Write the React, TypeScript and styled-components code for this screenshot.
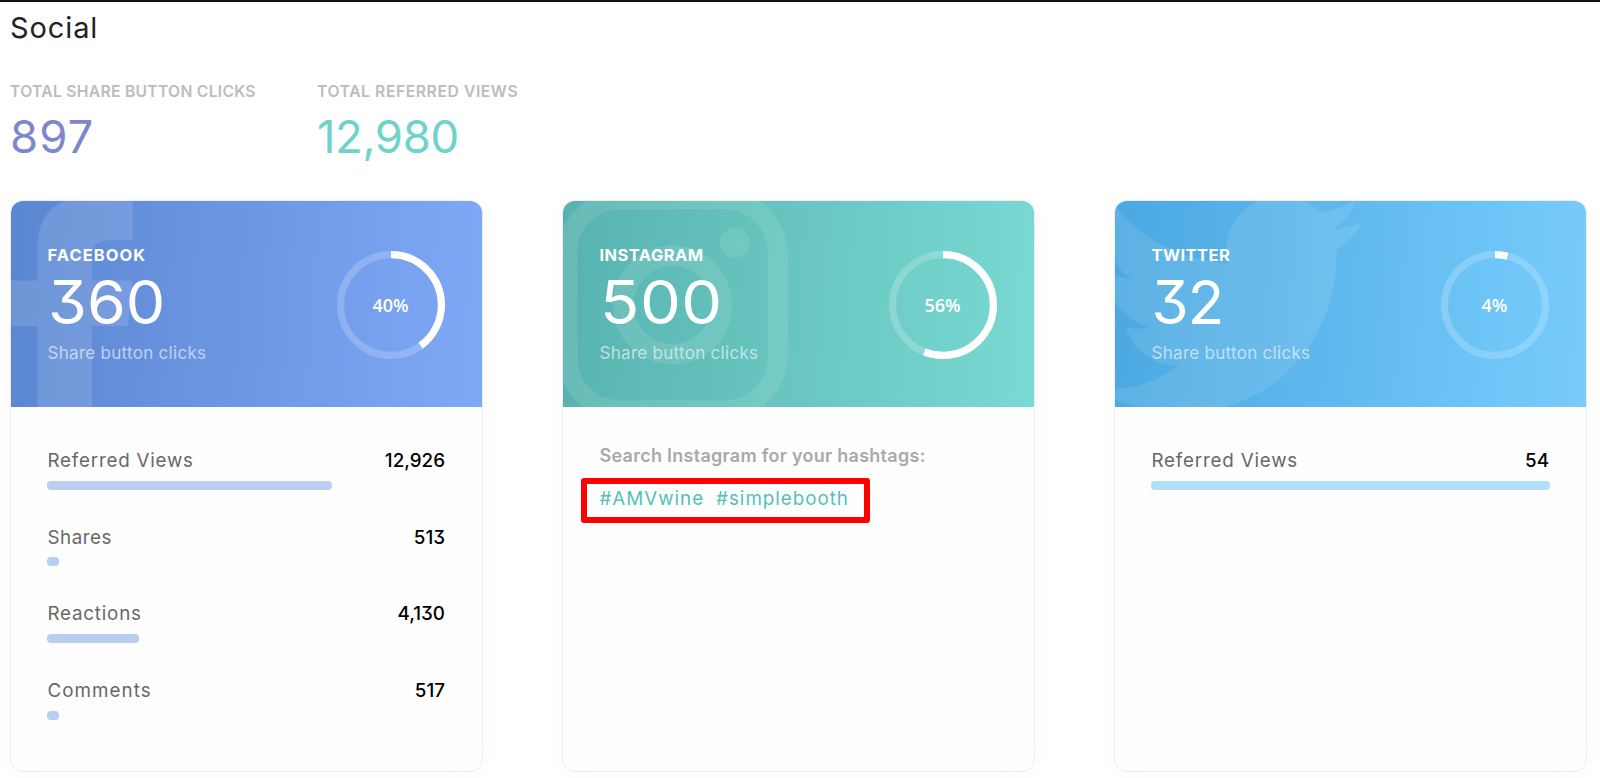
import React from "react";
import styled, { createGlobalStyle } from "styled-components";

const GlobalStyle = createGlobalStyle`
  * { box-sizing: border-box; }
  body {
    margin: 0;
    background: #fff;
    font-family: Inter, "Liberation Sans", sans-serif;
    font-feature-settings: "cv09" 1;
    overflow: hidden;
  }
`;

const Page = styled.main`
  height: 778px;
  padding: 8px 13px 0 10px;
  border-top: 2px solid #111;
`;

const Title = styled.h1`
  margin: 0;
  color: #222;
  font-size: 29px;
  font-weight: 400;
  line-height: 35px;
  letter-spacing: 0.9px;
`;

const Totals = styled.section`
  display: flex;
  margin-top: 37px;
`;

const Total = styled.div`
  width: 307px;
`;

const TotalLabel = styled.div<{ $tracking: number }>`
  color: #bcbcbc;
  font-size: 15.7px;
  font-weight: 600;
  line-height: 20px;
  letter-spacing: ${(p) => p.$tracking}px;
  white-space: nowrap;
`;

const TotalValue = styled.div<{ $color: string; $tracking: number }>`
  margin-top: 8px;
  color: ${(p) => p.$color};
  font-size: 45.5px;
  font-weight: 400;
  line-height: 54px;
  letter-spacing: ${(p) => p.$tracking}px;
`;

const Cards = styled.section`
  display: grid;
  grid-template-columns: repeat(3, 473px);
  column-gap: 79px;
  margin-top: 36px;
`;

const Card = styled.article`
  height: 572px;
  border: 1px solid #eeeeee;
  border-radius: 13px;
  background: #fefefe;
  background-clip: padding-box;
  box-shadow: 0 0 30px rgba(0, 0, 0, 0.02);
  overflow: hidden;
`;

const CardHeader = styled.header<{ $gradient: string }>`
  position: relative;
  display: flex;
  justify-content: space-between;
  height: 206px;
  padding: 44px 37.5px 0 36.5px;
  background: ${(p) => p.$gradient};
  color: #fff;
  overflow: hidden;
`;

const Watermark = styled.svg`
  position: absolute;
  top: 0;
  left: 0;
  width: 300px;
  height: 206px;
  fill: #fff;
`;

const Headline = styled.div`
  position: relative;
`;

const Network = styled.div<{ $tracking: number }>`
  font-size: 16.5px;
  font-weight: 650;
  line-height: 20px;
  letter-spacing: ${(p) => p.$tracking}px;
`;

const Clicks = styled.div<{ $stretch: number; $tracking: number }>`
  margin-top: 3.5px;
  font-size: 60px;
  font-weight: 400;
  line-height: 66px;
  letter-spacing: ${(p) => p.$tracking}px;
  transform: scaleX(${(p) => p.$stretch});
  transform-origin: left;
`;

const Caption = styled.div`
  margin-top: 7.5px;
  font-size: 17px;
  line-height: 22px;
  letter-spacing: 0.29px;
  opacity: 0.58;
`;

const Donut = styled.div`
  position: relative;
  display: grid;
  place-items: center;
  width: 108px;
  height: 108px;
  margin-top: 6px;
`;

const Ring = styled.svg`
  grid-area: 1 / 1;
  width: 108px;
  height: 108px;
  fill: none;
  stroke: #fff;
  stroke-width: 7.2;
`;

const Percent = styled.span`
  grid-area: 1 / 1;
  font: 600 18px/24px "Open Sans", sans-serif;
`;

const CardBody = styled.div`
  padding: 42px 36.5px 0 36px;
`;

const Metric = styled.div`
  height: 76.7px;
`;

const MetricText = styled.div`
  display: flex;
  justify-content: space-between;
  padding: 0 0.5px;
  font-size: 18.8px;
  line-height: 24px;
`;

const MetricName = styled.span<{ $tracking: number }>`
  color: #686868;
  letter-spacing: ${(p) => p.$tracking}px;
`;

const MetricValue = styled.span`
  color: #000;
  font-weight: 520;
`;

const Bar = styled.div<{ $color: string }>`
  height: 9px;
  margin-top: 7.7px;
  border-radius: 4px;
  background: ${(p) => p.$color};
`;

const HashtagPanel = styled.div`
  padding: 37px 0 0 36.5px;
`;

const HashtagTitle = styled.div`
  color: #a9a9a9;
  font-size: 18px;
  font-weight: 600;
  line-height: 24px;
  letter-spacing: 0.27px;
`;

const HashtagBox = styled.div`
  display: flex;
  gap: 12px;
  width: 289px;
  height: 45px;
  margin: 9.5px 0 0 -18.5px;
  padding: 3.6px 0 0 12.5px;
  border: 6px solid #fe0000;
  border-radius: 3px;
`;

const Hashtag = styled.a`
  color: #55c0b8;
  font-size: 18.8px;
  line-height: 24px;
  letter-spacing: 0.98px;
`;

const FacebookMark = () => (
  <Watermark viewBox="0 -0.6 300 206" fillOpacity={0.12}>
    <path d="M26.7 206V124.3H0V79H26.7V45C26.7 22 36 7 54 -1H121.7V38.6H100C87 38.6 81 43 81 56V79H121.7L116.7 124.3H81V206Z" />
  </Watermark>
);

const InstagramMark = () => (
  <Watermark viewBox="0 -0.6 300 206" fillOpacity={0.1}>
    <path
      fillRule="evenodd"
      d="M60 -12H159A66 66 0 0 1 225 54V153A66 66 0 0 1 159 219H60A66 66 0 0 1 -6 153V54A66 66 0 0 1 60 -12ZM56.3 8A42 42 0 0 0 14.3 50V156.7A42 42 0 0 0 56.3 198.7H162.7A42 42 0 0 0 204.7 156.7V50A42 42 0 0 0 162.7 8Z"
    />
    <path
      fillRule="evenodd"
      d="M109.5 43.6A59.7 59.7 0 1 1 109.5 163A59.7 59.7 0 1 1 109.5 43.6ZM109.5 64.3A39 39 0 1 0 109.5 142.3A39 39 0 1 0 109.5 64.3Z"
    />
    <circle cx="171.8" cy="41.3" r="15" />
  </Watermark>
);

const TwitterMark = () => (
  <Watermark viewBox="0 -0.6 300 206" fillOpacity={0.1}>
    <path
      transform="translate(-18.8 -31) scale(11.15)"
      d="M23.953 4.57a10 10 0 01-2.825.775 4.958 4.958 0 002.163-2.723c-.951.555-2.005.959-3.127 1.184a4.92 4.92 0 00-8.384 4.482C7.69 8.095 4.067 6.13 1.64 3.162a4.822 4.822 0 00-.666 2.475c0 1.71.87 3.213 2.188 4.096a4.904 4.904 0 01-2.228-.616v.06a4.923 4.923 0 003.946 4.827 4.996 4.996 0 01-2.212.085 4.936 4.936 0 004.604 3.417 9.867 9.867 0 01-6.102 2.105c-.39 0-.779-.023-1.17-.067a13.995 13.995 0 007.557 2.209c9.053 0 13.998-7.496 13.998-13.985 0-.21 0-.42-.015-.63A9.935 9.935 0 0024 4.59z"
    />
  </Watermark>
);

type NetworkHeaderProps = {
  name: string;
  nameTracking: number;
  clicks: string;
  clicksTracking: number;
  clicksStretch: number;
  percent: number;
  gradient: string;
  mark: React.ReactNode;
};

const NetworkHeader = (p: NetworkHeaderProps) => (
  <CardHeader $gradient={p.gradient}>
    {p.mark}
    <Headline>
      <Network $tracking={p.nameTracking}>{p.name}</Network>
      <Clicks $tracking={p.clicksTracking} $stretch={p.clicksStretch}>
        {p.clicks}
      </Clicks>
      <Caption>Share button clicks</Caption>
    </Headline>
    <Donut>
      <Ring viewBox="0 0 108 108">
        <circle cx="54" cy="54" r="50.4" strokeOpacity={0.2} />
        <circle
          cx="54"
          cy="54"
          r="50.4"
          pathLength={100}
          strokeDasharray={`${p.percent} 100`}
          transform="rotate(-90 54 54)"
        />
      </Ring>
      <Percent>{p.percent}%</Percent>
    </Donut>
  </CardHeader>
);

type MetricRowProps = {
  name: string;
  value: string;
  width: number;
  color: string;
  tracking: number;
};

const MetricRow = ({ name, value, width, color, tracking }: MetricRowProps) => (
  <Metric>
    <MetricText>
      <MetricName $tracking={tracking}>{name}</MetricName>
      <MetricValue>{value}</MetricValue>
    </MetricText>
    <Bar $color={color} style={{ width: `${width}%` }} />
  </Metric>
);

const facebookMetrics = [
  { name: "Referred Views", value: "12,926", width: 71.6, tracking: 0.78 },
  { name: "Shares", value: "513", width: 3.1, tracking: 0.5 },
  { name: "Reactions", value: "4,130", width: 23, tracking: 0.78 },
  { name: "Comments", value: "517", width: 3.1, tracking: 1.05 },
];

export default function App() {
  return (
    <Page>
      <GlobalStyle />
      <Title>Social</Title>
      <Totals>
        <Total>
          <TotalLabel $tracking={0.27}>TOTAL SHARE BUTTON CLICKS</TotalLabel>
          <TotalValue $color="#7f87cb" $tracking={1}>897</TotalValue>
        </Total>
        <Total>
          <TotalLabel $tracking={0.57}>TOTAL REFERRED VIEWS</TotalLabel>
          <TotalValue $color="#6fd2cb" $tracking={-0.4}>12,980</TotalValue>
        </Total>
      </Totals>
      <Cards>
        <Card>
          <NetworkHeader
            name="FACEBOOK"
            nameTracking={1.05}
            clicks="360"
            clicksTracking={0}
            clicksStretch={1.045}
            percent={40}
            gradient="linear-gradient(94deg, #5a87d1 0%, #648eda 24%, #7fa8f6 100%)"
            mark={<FacebookMark />}
          />
          <CardBody>
            {facebookMetrics.map((m) => (
              <MetricRow key={m.name} {...m} color="#bacef1" />
            ))}
          </CardBody>
        </Card>
        <Card>
          <NetworkHeader
            name="INSTAGRAM"
            nameTracking={0.45}
            clicks="500"
            clicksTracking={0.5}
            clicksStretch={1.08}
            percent={56}
            gradient="linear-gradient(94deg, #57b3af 0%, #7ad9d3 100%)"
            mark={<InstagramMark />}
          />
          <HashtagPanel>
            <HashtagTitle>Search Instagram for your hashtags:</HashtagTitle>
            <HashtagBox>
              <Hashtag>#AMVwine</Hashtag>
              <Hashtag>#simplebooth</Hashtag>
            </HashtagBox>
          </HashtagPanel>
        </Card>
        <Card>
          <NetworkHeader
            name="TWITTER"
            nameTracking={0.45}
            clicks="32"
            clicksTracking={-1}
            clicksStretch={1}
            percent={4}
            gradient="linear-gradient(94deg, #4ba8e1 0%, #77ccfc 100%)"
            mark={<TwitterMark />}
          />
          <CardBody>
            <MetricRow name="Referred Views" value="54" width={100} color="#aee0f8" tracking={0.8} />
          </CardBody>
        </Card>
      </Cards>
    </Page>
  );
}
